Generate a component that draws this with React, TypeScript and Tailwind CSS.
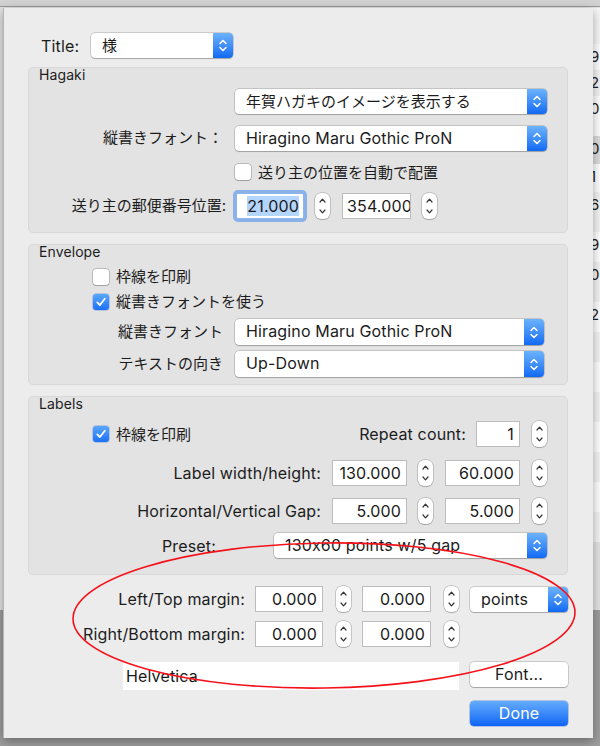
import React from "react";

// popup button: white body, blue double-arrow cap on the right
function Popup({ value, className, jp }: { value: string; className: string; jp?: boolean }) {
  return (
    <div
      className={`flex rounded-[4px] bg-white shadow-[0_0_0_0.5px_rgba(0,0,0,0.28),0_1px_1px_rgba(0,0,0,0.18)] ${className}`}
    >
      <span
        className={`flex-1 min-w-0 truncate pl-[11px] leading-[25px] text-[#1c1c1c] ${
          jp ? "text-[15px]" : "text-[16px] tracking-[0.15px]"
        }`}
      >
        {value}
      </span>
      <span className="flex w-[20px] items-center justify-center rounded-r-[4px] bg-gradient-to-b from-[#6cb2fb] to-[#0f69f3]">
        <svg width="10" height="17" viewBox="0 0 10 17" fill="none">
          <path d="M2 6.5 L5 3.5 L8 6.5" stroke="white" strokeWidth="1.5" strokeLinecap="round" strokeLinejoin="round" />
          <path d="M2 10.5 L5 13.5 L8 10.5" stroke="white" strokeWidth="1.5" strokeLinecap="round" strokeLinejoin="round" />
        </svg>
      </span>
    </div>
  );
}

function Stepper({ className = "" }: { className?: string }) {
  return (
    <div
      className={`flex h-[26px] w-[15px] flex-col items-center justify-between rounded-[6px] bg-white py-[5px] shadow-[0_0_0_0.5px_rgba(0,0,0,0.3),0_1px_1px_rgba(0,0,0,0.15)] ${className}`}
    >
      <svg width="7" height="5" viewBox="0 0 7 5" fill="none">
        <path d="M1 4 L3.5 1.2 L6 4" stroke="#333" strokeWidth="1.2" strokeLinecap="round" strokeLinejoin="round" />
      </svg>
      <svg width="7" height="5" viewBox="0 0 7 5" fill="none">
        <path d="M1 1 L3.5 3.8 L6 1" stroke="#333" strokeWidth="1.2" strokeLinecap="round" strokeLinejoin="round" />
      </svg>
    </div>
  );
}

function Field({ value, className }: { value: string; className: string }) {
  return (
    <div
      className={`h-[26px] overflow-hidden whitespace-nowrap border border-[#bcbcbc] bg-white px-[5px] text-right text-[16px] leading-[24px] tracking-[0.15px] text-[#1a1a1a] ${className}`}
    >
      {value}
    </div>
  );
}

function Checkbox({ checked, label }: { checked?: boolean; label: string }) {
  return (
    <div className="flex items-center gap-[7px]">
      {checked ? (
        <span className="flex h-[16px] w-[16px] items-center justify-center rounded-[3px] bg-gradient-to-b from-[#5aa6fb] to-[#1c70f4] shadow-[0_0_0_0.5px_rgba(0,60,200,0.4)]">
          <svg width="12" height="12" viewBox="0 0 12 12" fill="none">
            <path d="M2.3 6.4 L4.9 9 L9.8 2.8" stroke="white" strokeWidth="1.8" strokeLinecap="round" strokeLinejoin="round" />
          </svg>
        </span>
      ) : (
        <span className="h-[16px] w-[16px] rounded-[3px] bg-white shadow-[0_0_0_0.5px_rgba(0,0,0,0.35),0_1px_1px_rgba(0,0,0,0.15)]" />
      )}
      <span className="text-[15px] leading-[17px] text-[#1c1c1c]">{label}</span>
    </div>
  );
}

function Box({ title, className, children }: { title: string; className: string; children: React.ReactNode }) {
  return (
    <div className={`w-[540px] rounded-[5px] border border-[#d8d8d8] bg-[#e3e3e3] ${className}`}>
      <div className="h-[14px] pl-[10px] text-[14px] leading-[14px] tracking-[0.1px] text-[#1c1c1c]">{title}</div>
      {children}
    </div>
  );
}

const sideRows = [
  { h: 36, bg: "bg-[#f7f7f7]", t: "" },
  { h: 26, bg: "bg-white", t: "9" },
  { h: 26, bg: "bg-[#f4f4f4]", t: "2" },
  { h: 40, bg: "bg-white", t: "0" },
  { h: 28, bg: "bg-[#dcdcdc]", t: "0" },
  { h: 28, bg: "bg-white", t: "1" },
  { h: 40, bg: "bg-[#f4f4f4]", t: "6" },
  { h: 30, bg: "bg-white", t: "9" },
  { h: 40, bg: "bg-[#f4f4f4]", t: "0" },
  { h: 30, bg: "bg-white", t: "2" },
  { h: 30, bg: "bg-[#f4f4f4]", t: "" },
  { h: 30, bg: "bg-white", t: "" },
  { h: 30, bg: "bg-[#f4f4f4]", t: "" },
  { h: 30, bg: "bg-white", t: "" },
  { h: 30, bg: "bg-[#f4f4f4]", t: "" },
  { h: 30, bg: "bg-white", t: "" },
  { h: 30, bg: "bg-[#f4f4f4]", t: "" },
];

const latin = "text-[16px] tracking-[0.15px] text-[#1c1c1c]";
const jpText = "text-[15px] text-[#1c1c1c]";

export default function App() {
  return (
    <div className="relative h-[746px] w-[600px] overflow-hidden bg-[#9e9e9e] pl-[3px] pt-[8px] font-[Inter,'Noto_Sans_CJK_JP',sans-serif]">
      {/* window behind the sheet */}
      <div className="absolute left-0 top-0 h-[610px] w-[600px] bg-[#e4e4e4]">
        <div className="h-[7px] border-b border-[#9a9a9a] bg-[#d2d2d2]" />
        <div className="absolute left-[593px] top-[8px] w-[7px] overflow-hidden">
          {sideRows.map((r, i) => (
            <div
              key={i}
              style={{ height: r.h }}
              className={`${r.bg} -ml-[3px] pt-[4px] text-[15px] leading-[18px] text-[#222]`}
            >
              {r.t}
            </div>
          ))}
        </div>
      </div>

      {/* sheet */}
      <div className="relative h-[730px] w-[590px] border-l border-[#b5b5b5] bg-[#ececec] pl-[24px] pt-[25px] shadow-[0_3px_10px_rgba(0,0,0,0.35)]">
        <div className="flex h-[25px] items-center">
          <span className={`ml-[13px] w-[50px] ${latin}`}>Title:</span>
          <Popup jp value="様" className="h-[25px] w-[142px]" />
        </div>

        <Box title="Hagaki" className="mt-[9px] h-[166px]">
          <Popup jp value="年賀ハガキのイメージを表示する" className="ml-[206px] mt-[7px] h-[25px] w-[312px]" />
          <div className="mt-[12px] flex items-center">
            <span className={`w-[194px] text-right ${jpText}`}>縦書きフォント：</span>
            <Popup value="Hiragino Maru Gothic ProN" className="ml-[12px] h-[25px] w-[312px]" />
          </div>
          <div className="ml-[206px] mt-[12px] flex h-[18px] items-center">
            <Checkbox label="送り主の位置を自動で配置" />
          </div>
          <div className="mt-[12px] flex items-center">
            <span className={`w-[197px] text-right ${jpText}`}>送り主の郵便番号位置:</span>
            <div className="ml-[10px] h-[26px] w-[68px] rounded-[2px] border border-[#8fb6ec] bg-white pr-[4px] text-right text-[16px] leading-[24px] tracking-[0.15px] text-[#1a1a1a] shadow-[0_0_0_3px_rgba(110,160,235,0.75)]">
              <span className="bg-[#b4d5fe]">21.000</span>
            </div>
            <Stepper className="ml-[11px]" />
            <Field value="354.000" className="ml-[12px] w-[69px] !pl-[4px] !text-left" />
            <Stepper className="ml-[11px]" />
          </div>
        </Box>

        <Box title="Envelope" className="mt-[11px] h-[141px]">
          <div className="ml-[64px] mt-[9px]">
            <Checkbox label="枠線を印刷" />
          </div>
          <div className="ml-[64px] mt-[8px]">
            <Checkbox checked label="縦書きフォントを使う" />
          </div>
          <div className="mt-[9px] flex items-center">
            <span className={`w-[194px] text-right ${jpText}`}>縦書きフォント</span>
            <Popup value="Hiragino Maru Gothic ProN" className="ml-[12px] h-[26px] w-[309px]" />
          </div>
          <div className="mt-[6px] flex items-center">
            <span className={`w-[194px] text-right ${jpText}`}>テキストの向き</span>
            <Popup value="Up-Down" className="ml-[12px] h-[26px] w-[309px]" />
          </div>
        </Box>

        <Box title="Labels" className="mt-[11px] h-[179px]">
          <div className="mt-[10px] flex h-[26px] items-center pr-[20px]">
            <div className="ml-[64px]">
              <Checkbox checked label="枠線を印刷" />
            </div>
            <span className={`ml-auto ${latin}`}>Repeat count:</span>
            <Field value="1" className="ml-[10px] w-[44px]" />
            <Stepper className="ml-[12px]" />
          </div>
          <div className="mt-[13px] flex items-center">
            <span className={`w-[292px] text-right ${latin}`}>Label width/height:</span>
            <Field value="130.000" className="ml-[11px] w-[75px]" />
            <Stepper className="ml-[11px]" />
            <Field value="60.000" className="ml-[12px] w-[75px]" />
            <Stepper className="ml-[12px]" />
          </div>
          <div className="mt-[12px] flex items-center">
            <span className={`w-[292px] text-right ${latin}`}>Horizontal/Vertical Gap:</span>
            <Field value="5.000" className="ml-[11px] w-[75px]" />
            <Stepper className="ml-[11px]" />
            <Field value="5.000" className="ml-[12px] w-[75px]" />
            <Stepper className="ml-[12px]" />
          </div>
          <div className="mt-[9px] flex items-center">
            <span className={`ml-[133px] w-[112px] ${latin}`}>Preset:</span>
            <Popup value="130x60 points w/5 gap" className="h-[25px] w-[273px]" />
          </div>
        </Box>

        <div className="mt-[11px] flex items-center">
          <span className={`w-[217px] text-right ${latin}`}>Left/Top margin:</span>
          <Field value="0.000" className="ml-[10px] w-[68px]" />
          <Stepper className="ml-[13px]" />
          <Field value="0.000" className="ml-[11px] w-[69px]" />
          <Stepper className="ml-[13px]" />
          <Popup value="points" className="ml-[11px] h-[25px] w-[98px]" />
        </div>
        <div className="mt-[9px] flex items-center">
          <span className={`w-[217px] text-right ${latin}`}>Right/Bottom margin:</span>
          <Field value="0.000" className="ml-[10px] w-[68px]" />
          <Stepper className="ml-[13px]" />
          <Field value="0.000" className="ml-[11px] w-[69px]" />
          <Stepper className="ml-[13px]" />
        </div>

        <div className="mt-[15px] flex items-start">
          <div className="ml-[95px] h-[28px] w-[336px] bg-white pl-[3px] text-[16px] leading-[28px] tracking-[0.15px] text-[#1a1a1a]">
            Helvetica
          </div>
          <button className={`ml-[11px] h-[25px] w-[98px] rounded-[4px] bg-white text-center leading-[25px] shadow-[0_0_0_0.5px_rgba(0,0,0,0.28),0_1px_1px_rgba(0,0,0,0.18)] ${latin}`}>
            Font...
          </button>
        </div>
        <div className="mt-[11px] flex">
          <button className="ml-[442px] h-[25px] w-[98px] rounded-[4px] bg-gradient-to-b from-[#64abfc] to-[#0b64f5] text-center text-[16px] leading-[25px] tracking-[0.15px] text-white shadow-[0_0_0_0.5px_rgba(0,70,200,0.5)]">
            Done
          </button>
        </div>
      </div>

      {/* red hand-drawn annotation ring */}
      <svg className="pointer-events-none absolute left-0 top-0" width="600" height="746">
        <ellipse cx="324" cy="615.5" rx="251" ry="72.5" transform="rotate(-0.8 324 615.5)" fill="none" stroke="#f5111a" strokeWidth="1.6" />
      </svg>
    </div>
  );
}
